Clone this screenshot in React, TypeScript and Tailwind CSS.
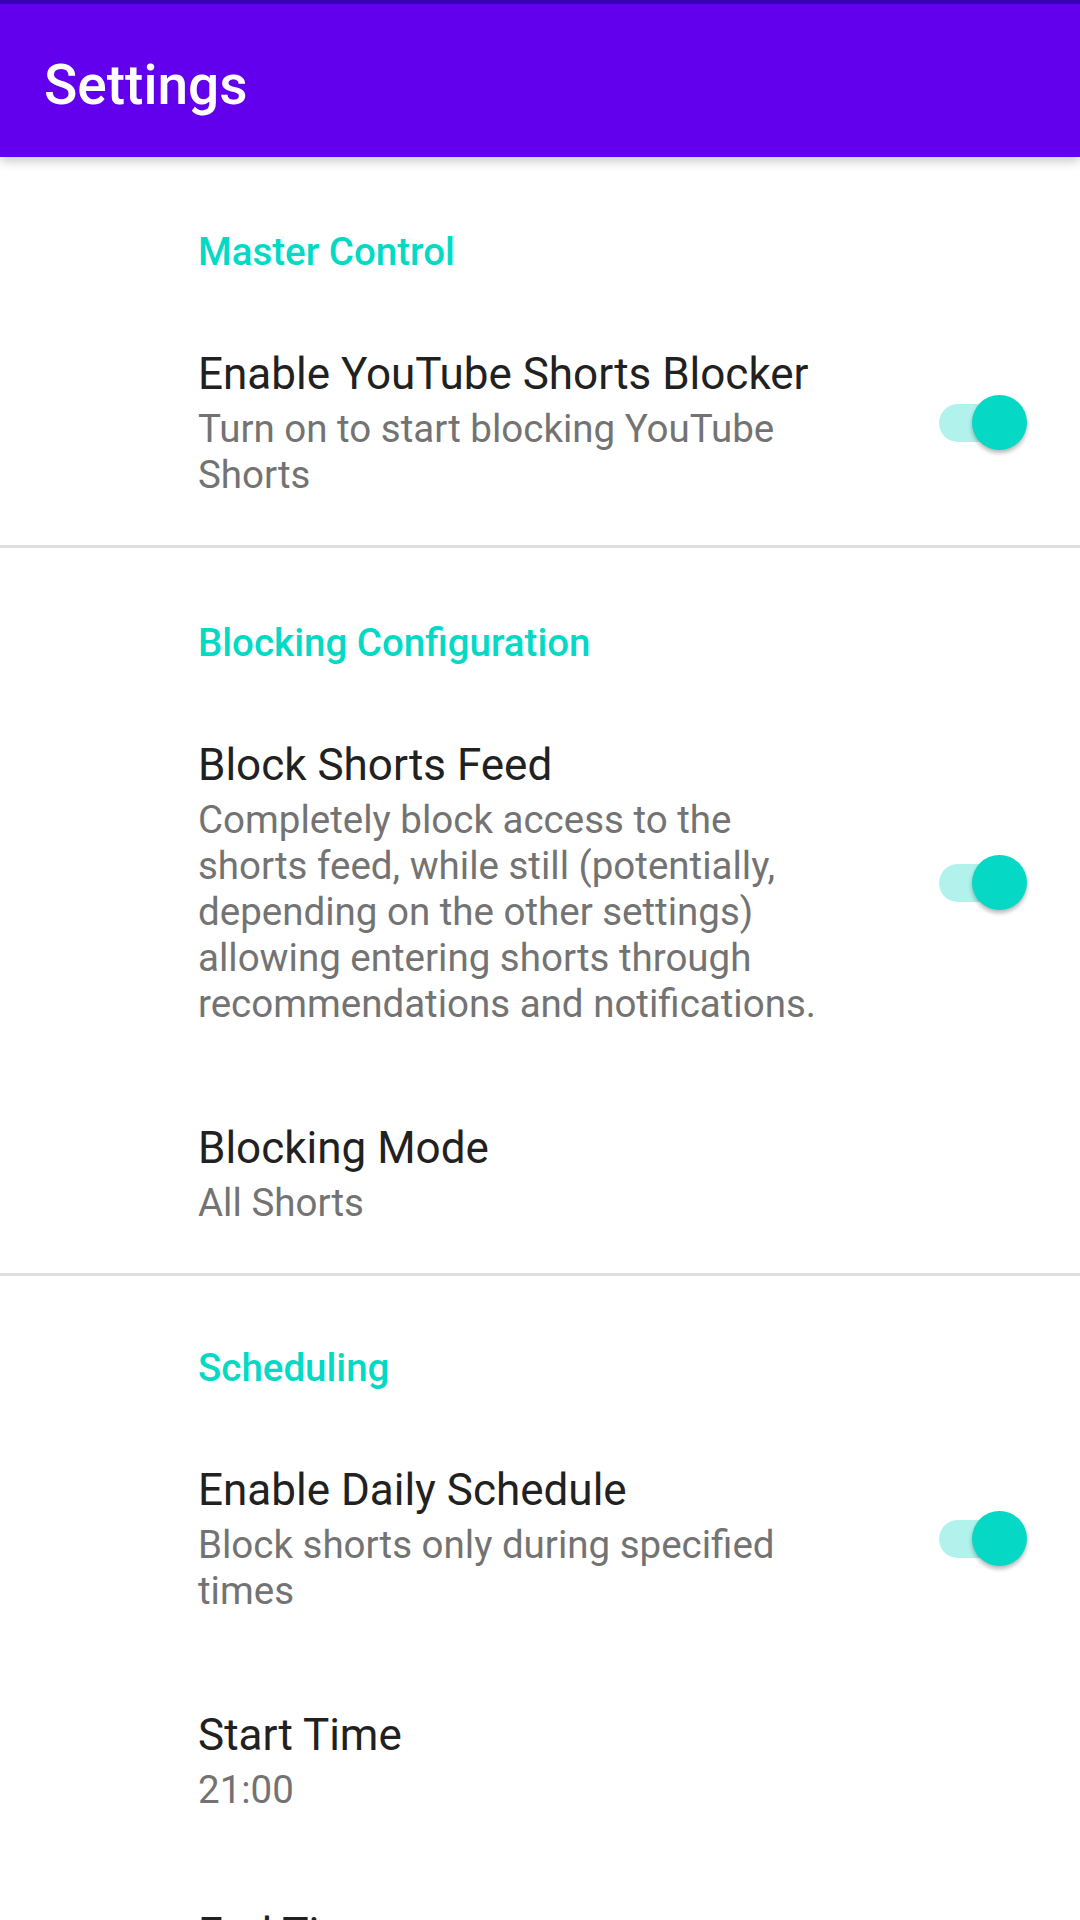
import React from "react";

function Switch() {
  return (
    <div className="relative w-[88px] h-[58px] shrink-0">
      <div className="absolute left-0 top-[10px] h-[38px] w-[84px] rounded-full bg-[#b2f2ec]" />
      <div className="absolute right-0 top-[1px] w-[55px] h-[55px] rounded-full bg-[#05d8c4] shadow-[0_3px_4px_rgba(0,0,0,0.28)]" />
    </div>
  );
}

function Category({ label, pt }: { label: string; pt: string }) {
  return (
    <div className={`pl-[198px] ${pt} pb-[25px]`}>
      <div className="text-[38.5px] leading-[46px] font-medium text-[#03dac5]">{label}</div>
    </div>
  );
}

function Item({
  title,
  summary,
  toggle,
}: {
  title: string;
  summary: string;
  toggle?: boolean;
}) {
  return (
    <div className="flex items-center pl-[198px] pr-[53px] pt-[48px] pb-[47px]">
      <div className="w-[640px] flex flex-col">
        <div className="text-[44px] leading-[52px] text-[#212121]">{title}</div>
        <div className="mt-[6px] text-[38.5px] leading-[46px] text-[#737373]">{summary}</div>
      </div>
      <div className="flex-1" />
      {toggle ? <Switch /> : null}
    </div>
  );
}

function Divider() {
  return <div className="h-[3px] shrink-0 bg-[#dfdfdf]" />;
}

export default function App() {
  return (
    <div className="w-[1080px] h-[1920px] overflow-hidden bg-white font-['Roboto',sans-serif]">
      <div className="relative z-10 shadow-[0_4px_10px_rgba(0,0,0,0.22)]">
        <div className="h-[4px] bg-[#3a00b5]" />
        <header className="h-[153px] bg-[#6200ee] flex items-center pl-[44px] pt-[8px]">
          <span className="text-white text-[55px] leading-[64px] font-medium">Settings</span>
        </header>
      </div>

      <Category label="Master Control" pt="pt-[72px]" />
      <Item
        title="Enable YouTube Shorts Blocker"
        summary="Turn on to start blocking YouTube Shorts"
        toggle
      />
      <Divider />

      <Category label="Blocking Configuration" pt="pt-[72px]" />
      <Item
        title="Block Shorts Feed"
        summary="Completely block access to the shorts feed, while still (potentially, depending on the other settings) allowing entering shorts through recommendations and notifications."
        toggle
      />
      <Item title="Blocking Mode" summary="All Shorts" />
      <Divider />

      <Category label="Scheduling" pt="pt-[69px]" />
      <Item
        title="Enable Daily Schedule"
        summary="Block shorts only during specified times"
        toggle
      />
      <Item title="Start Time" summary="21:00" />
      <Item title="End Time" summary="06:00" />
    </div>
  );
}
